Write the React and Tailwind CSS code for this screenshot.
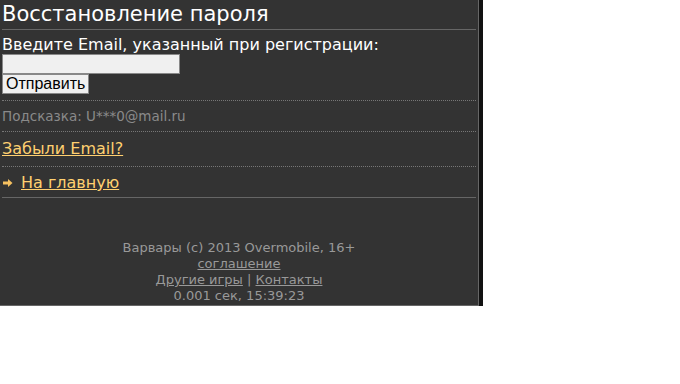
import React from 'react';

const App = () => {
  return (
    <div className="min-h-[384px] bg-white">
      <div className="flex w-[483px]">
        <div className="w-[479px] bg-[#333333] border-r border-b border-[#666] px-[2px] pb-[1px] font-['DejaVu_Sans',sans-serif] text-white">
          <h1 className="text-[21px] leading-[29px] font-normal">Восстановление пароля</h1>
          <div className="border-t border-[#666]" />
          <div className="pt-[6px]">
            <div className="text-[16px] leading-[18px]">Введите Email, указанный при регистрации:</div>
            <input
              type="text"
              className="block w-[178px] h-[20px] bg-[#f0f0f0] border border-[#888] outline-none"
            />
            <button className="block h-[20px] px-[3px] bg-[#f0f0f0] border border-[#888] text-black text-[16px] leading-[16px] font-['Liberation_Sans',sans-serif]">
              Отправить
            </button>
          </div>
          <div className="mt-[6px] border-t border-dotted border-[#777]" />
          <div className="text-[13.5px] leading-[30px] text-[#8a8a8a]">Подсказка: U***0@mail.ru</div>
          <div className="border-t border-dotted border-[#777]" />
          <div className="py-[7px] text-[16px] leading-[20px]">
            <a href="#" className="text-[#ffd070] underline">Забыли Email?</a>
          </div>
          <div className="border-t border-dotted border-[#777]" />
          <div className="flex items-center pt-[6px] pb-[4px] text-[16px] leading-[20px]">
            <svg width="10" height="10" viewBox="0 0 10 10" className="mr-[8px] ml-[1px]">
              <path d="M0 3.5 H5 V1 L9.5 5 L5 9 V6.5 H0 Z" fill="#f5c060" />
            </svg>
            <a href="#" className="text-[#ffd070] underline">На главную</a>
          </div>
          <div className="border-t border-[#666]" />
          <div className="pt-[42px] text-center text-[13px] leading-[16px] text-[#999]">
            <div>Варвары (с) 2013 Overmobile, 16+</div>
            <div><a href="#" className="underline">соглашение</a></div>
            <div>
              <a href="#" className="underline">Другие игры</a> | <a href="#" className="underline">Контакты</a>
            </div>
            <div>0.001 сек, 15:39:23</div>
          </div>
        </div>
        <div className="w-[4px] bg-[#111]" />
      </div>
    </div>
  );
};

export default App;
